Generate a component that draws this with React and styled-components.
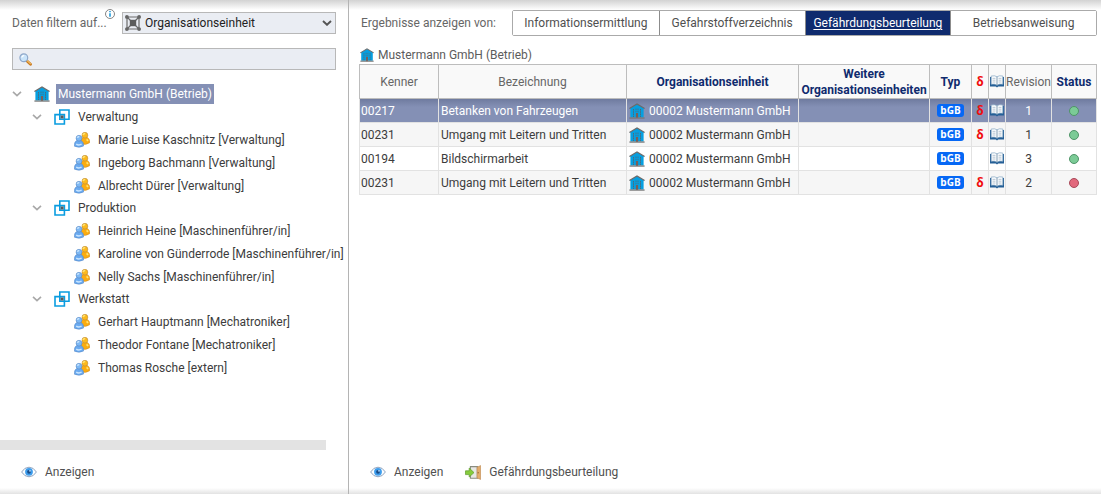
import React from "react";
import styled, { createGlobalStyle } from "styled-components";

const GlobalStyle = createGlobalStyle`
  *, *::before, *::after { box-sizing: border-box; }
  body {
    margin: 0;
    background: #fff;
    color: #3c3c3c;
    font: 12px/16px Roboto, "Open Sans", sans-serif;
  }
  button, input, select { font: inherit; color: inherit; }
  svg { flex: none; }
`;

const Page = styled.div`
  display: flex;
  min-height: 100vh;
  background:
    linear-gradient(#d2d2d2, #fff) top / 100% 10px no-repeat,
    linear-gradient(#fff, #e2e2e2) bottom / 100% 6px no-repeat,
    #fff;
`;

const Sidebar = styled.aside`
  flex: 0 0 349px;
  min-width: 0;
  display: flex;
  flex-direction: column;
  border-right: 1px solid #b4b4b4;
`;

const Main = styled.main`
  flex: 1;
  min-width: 0;
  display: flex;
  flex-direction: column;
  padding: 10px 4px 0 10px;
`;

const Filters = styled.div`
  display: flex;
  flex-direction: column;
  gap: 14px;
  padding: 12px 12px 0;
`;

const FilterRow = styled.div`
  display: flex;
  align-items: center;
  justify-content: space-between;
`;

const FilterLabel = styled.label`
  position: relative;
  color: #666;
`;

const InfoBadge = styled.span`
  position: absolute;
  left: 93px;
  top: -6px;
  display: flex;
`;

const Field = styled.div`
  position: relative;
  display: flex;
  align-items: center;
  width: ${(p) => p.$width || "100%"};
  height: 22px;
  border: 1px solid #b8b8b8;
  background: #eaedf3;
`;

const FieldIcon = styled.span`
  position: absolute;
  left: ${(p) => (p.$right ? "auto" : p.$left)};
  right: ${(p) => p.$right || "auto"};
  display: flex;
  pointer-events: none;
`;

const Select = styled.select`
  width: 100%;
  height: 100%;
  padding: 0 20px 0 22px;
  border: 0;
  background: transparent;
  color: #222;
  appearance: none;
`;

const SearchInput = styled.input`
  width: 100%;
  height: 100%;
  padding: 0 6px 0 24px;
  border: 0;
  background: transparent;
`;

const Tree = styled.ul`
  margin: 0;
  padding: ${(p) => (p.$root ? "12px 0 0" : "0")};
  list-style: none;
  white-space: nowrap;
`;

const TreeRow = styled.div`
  display: flex;
  align-items: center;
  height: ${(p) => [24, 22, 23][p.$level]}px;
  padding-left: ${(p) => [12, 32, 74][p.$level]}px;
`;

const Toggle = styled.button`
  display: flex;
  width: 22px;
  padding: 0;
  border: 0;
  background: none;
`;

const NodeLabel = styled.button`
  height: 20px;
  margin-left: 6px;
  padding: 0 2px;
  border: 0;
  background: ${(p) => (p.$selected ? "#8490b5" : "none")};
  color: ${(p) => (p.$selected ? "#fff" : "#3c3c3c")};
`;

const ScrollThumb = styled.div`
  width: 326px;
  height: 10px;
  margin-top: auto;
  background: #e3e3e3;
`;

const Footer = styled.footer`
  display: flex;
  align-items: center;
  gap: 22px;
  height: 44px;
  margin-top: ${(p) => (p.$push ? "auto" : "0")};
  padding-left: ${(p) => (p.$push ? "11px" : "21px")};
`;

const Action = styled.button`
  display: flex;
  align-items: center;
  gap: 8px;
  padding: 0;
  border: 0;
  background: none;
  color: #505050;
`;

const ResultBar = styled.div`
  display: flex;
  align-items: center;
  justify-content: space-between;
  padding-left: 2px;
  color: #666;
`;

const Tabs = styled.div`
  display: grid;
  grid-template-columns: repeat(4, 1fr);
  width: 80%;
  max-width: 585px;
  height: 26px;
  border: 1px solid #aaa;
  border-radius: 2px;
`;

const Tab = styled.button`
  padding: 0;
  border: 0;
  border-left: ${(p) => (p.$first ? "0" : "1px solid #8c8c8c")};
  background: ${(p) => (p.$active ? "#0f2b6e" : "#fff")};
  color: ${(p) => (p.$active ? "#fff" : "#505050")};
  text-decoration: ${(p) => (p.$active ? "underline" : "none")};
  text-underline-offset: 2px;
`;

const Crumb = styled.div`
  display: flex;
  align-items: center;
  gap: 4px;
  height: 18px;
  margin-top: 10px;
  padding-left: 1px;
  color: #5c5c5c;
`;

const Table = styled.table`
  width: 100%;
  table-layout: fixed;
  border-collapse: separate;
  border-spacing: 0;
`;

const Col = styled.col`
  width: ${(p) => p.$width || "auto"};
`;

const Th = styled.th`
  height: 35px;
  padding: 0;
  border: 1px solid #bdbdbd;
  border-left-width: ${(p) => (p.$first ? "1px" : "0")};
  background: #f9f9f9;
  color: ${(p) => (p.$strong ? "#0f2b6e" : "#666")};
  font-weight: ${(p) => (p.$strong ? 700 : 400)};
`;

const Tr = styled.tr`
  background: ${(p) =>
    p.$selected
      ? "linear-gradient(#6f7b9f, #8490b5 8px)"
      : p.$striped
        ? "#f6f6f6"
        : "#fff"};
  color: ${(p) => (p.$selected ? "#fff" : "#3c3c3c")};
`;

const Td = styled.td`
  height: 24px;
  padding: 0 0 0 ${(p) => (p.$center ? "0" : p.$first ? "1px" : "2px")};
  border: solid #e2e2e2;
  border-width: 0 1px 1px ${(p) => (p.$first ? "1px" : "0")};
  text-align: ${(p) => (p.$center ? "center" : "left")};
  white-space: nowrap;
`;

const CellContent = styled.span`
  display: flex;
  align-items: center;
  justify-content: ${(p) => (p.$center ? "center" : "flex-start")};
  gap: 4px;
`;

const TypeBadge = styled.span`
  width: 27px;
  height: 13px;
  border-radius: 3px;
  background: #0668f5;
  color: #fff;
  font: 700 10px/13px "Open Sans", sans-serif;
  text-align: center;
`;

const Delta = styled.span`
  color: #f00c0c;
  font-family: "Open Sans", sans-serif;
  font-weight: 700;
`;

const StatusDot = styled.span`
  width: 10px;
  height: 10px;
  border: 1px solid ${(p) => (p.$color === "red" ? "#a84a5a" : "#4f9468")};
  border-radius: 50%;
  background: ${(p) => (p.$color === "red" ? "#e2697d" : "#7bcb96")};
`;

const InfoIcon = () => (
  <svg width="10" height="10" viewBox="0 0 10 10">
    <circle cx="5" cy="5" r="4.5" fill="#fff" stroke="#777" strokeWidth=".9" />
    <path d="M5 2v1.2M5 4.2v3.6" stroke="#1495d8" strokeWidth="1.5" />
  </svg>
);

const OrgIcon = () => (
  <svg width="16" height="16" viewBox="0 0 16 16">
    <path d="M2 2H14V14H2ZM2 2L14 14M14 2L2 14" fill="none" stroke="#6a6a6a" strokeWidth="1.2" />
    <path d="M4.8 4.8h6.4v6.4H4.8z" fill="#5c5c5c" />
    <circle cx="1.9" cy="1.9" r="1.9" fill="#666" />
    <circle cx="14.1" cy="1.9" r="1.9" fill="#666" />
    <circle cx="1.9" cy="14.1" r="1.9" fill="#666" />
    <circle cx="14.1" cy="14.1" r="1.9" fill="#666" />
  </svg>
);

const SelectArrow = () => (
  <svg width="10" height="6" viewBox="0 0 10 6">
    <path d="M1 1L5 4.8L9 1" fill="none" stroke="#555" strokeWidth="1.9" />
  </svg>
);

const SearchIcon = () => (
  <svg width="13" height="13" viewBox="0 0 13 13">
    <path d="M8 8L11.5 11.3" stroke="#c97a1f" strokeWidth="2.8" strokeLinecap="round" />
    <path d="M8.2 7.6L11.4 10.6" stroke="#f3bc62" strokeWidth="1.2" strokeLinecap="round" />
    <circle cx="4.8" cy="4.8" r="3.9" fill="#c9e4fa" stroke="#8fa8ca" strokeWidth="1.2" />
    <path d="M2.8 4.5Q3.2 2.6 5.2 2.6" fill="none" stroke="#fff" strokeWidth="1.2" />
  </svg>
);

const Chevron = () => (
  <svg width="10" height="6" viewBox="0 0 10 6">
    <path d="M1 .8L5 4.6L9 .8" fill="none" stroke="#a8a8a8" strokeWidth="1.6" />
  </svg>
);

const HouseIcon = ({ size = 16 }) => (
  <svg width={size} height={size} viewBox="0 0 16 16">
    <path d="M8 1L15.4 5.4H14.6V14.6H1.4V5.4H.6Z" fill="#069fe0" />
    <path d="M.4 5.6L8 1L15.6 5.6" fill="none" stroke="#6b6b6b" strokeWidth="1.2" />
    <path d="M4.5 6v8M11.5 6v8" stroke="#4c6a7c" strokeWidth="1" strokeDasharray="1.6 .6" />
    <path d="M7 5.5v4M9 5.5v4" stroke="#4c6a7c" strokeWidth=".8" strokeDasharray="1.5 .7" />
    <path d="M6.9 10h2.2v5H6.9z" fill="#7a5f58" />
    <path d="M.4 14.4h15.2v1.3H.4z" fill="#777" />
  </svg>
);

const GroupIcon = () => (
  <svg width="16" height="16" viewBox="0 0 16 16">
    <path d="M5.8 1h9.2v9.2H5.8z" fill="none" stroke="#0a9de0" strokeWidth="1.6" />
    <path d="M1 5.6h9.4V15H1z" fill="none" stroke="#0a9de0" strokeWidth="1.6" />
    <path d="M6.6 6.5h3v3h-3z" fill="#5a5a5a" />
  </svg>
);

const PeopleIcon = () => (
  <svg width="16" height="16" viewBox="0 0 16 16">
    <path d="M7 11.8Q6.2 6 9 5.4L13.5 5.4Q16.2 7.2 15.6 10.8Q12 13.4 7 11.8Z" fill="#fbac10" stroke="#c98522" strokeWidth=".5" />
    <circle cx="10.9" cy="3.2" r="2.9" fill="#fcb91c" stroke="#b98a40" strokeWidth=".6" />
    <path d="M9 3Q9.6 1.5 11.2 1.5M12.6 7.4l1.5 1.6" fill="none" stroke="#ffe372" strokeWidth="1.6" />
    <path d="M.4 14.2Q0 9.6 2.8 8.6L7 8.6Q10 9.8 9.6 14Q5 16.4 .4 14.2Z" fill="#6aaaf0" stroke="#5584c0" strokeWidth=".5" />
    <circle cx="5" cy="6.2" r="2.9" fill="#7db8f4" stroke="#5a88c2" strokeWidth=".6" />
    <path d="M3.3 5.8Q3.9 4.4 5.3 4.4M2.2 12.1Q5 13.8 7.6 12" fill="none" stroke="#c8e5ff" strokeWidth="1.5" />
  </svg>
);

const BookIcon = () => (
  <svg width="14" height="13" viewBox="0 0 14 13">
    <path d="M0 2H14V11.6H8.2L7 12.4L5.8 11.6H0Z" fill="#245f96" />
    <path d="M1.2 1Q5 .2 7 1.8Q9 .2 12.8 1V9.2Q9 8.6 7 10.2Q5 8.6 1.2 9.2Z" fill="#f8fbfd" stroke="#86a8c4" strokeWidth=".7" />
    <path d="M7 1.8V10" stroke="#7894ac" strokeWidth=".9" />
    <path d="M2.6 3.4h2.8M2.6 5.2h2.8M2.6 7h2.8M8.6 3.4h2.8M8.6 5.2h2.8M8.6 7h2.8" stroke="#b5c3d0" strokeWidth=".9" />
  </svg>
);

const EyeIcon = () => (
  <svg width="16" height="12" viewBox="0 0 16 12">
    <path d="M.6 6Q3.5 1.2 8 1.2T15.4 6Q12.5 10.8 8 10.8T.6 6Z" fill="#fafdff" stroke="#8299b8" strokeWidth=".9" />
    <circle cx="8" cy="5.8" r="3.9" fill="#3c9cec" />
    <circle cx="8" cy="5.8" r="1.9" fill="#174a86" />
    <circle cx="9" cy="4.8" r=".9" fill="#b8dcfa" />
  </svg>
);

const DoorIcon = () => (
  <svg width="16" height="15" viewBox="0 0 16 15">
    <path d="M5.4 1.6h7v11.6h-7z" fill="#e8e8e4" stroke="#8a8c80" strokeWidth="1.1" />
    <path d="M12 2.2L15.7 .6V14.4L12 13Z" fill="#e3ad6c" stroke="#b98450" strokeWidth=".6" />
    <path d="M13.2 7v1.4" stroke="#805020" strokeWidth=".8" />
    <path d="M.5 5.8H4.2V3L9 7.6L4.2 12V9.6H.5Z" fill="#86cc3c" stroke="#5e9c2c" strokeWidth=".7" />
  </svg>
);

const groups = [
  {
    name: "Verwaltung",
    people: [
      "Marie Luise Kaschnitz [Verwaltung]",
      "Ingeborg Bachmann [Verwaltung]",
      "Albrecht Dürer [Verwaltung]",
    ],
  },
  {
    name: "Produktion",
    people: [
      "Heinrich Heine [Maschinenführer/in]",
      "Karoline von Günderrode [Maschinenführer/in]",
      "Nelly Sachs [Maschinenführer/in]",
    ],
  },
  {
    name: "Werkstatt",
    people: [
      "Gerhart Hauptmann [Mechatroniker]",
      "Theodor Fontane [Mechatroniker]",
      "Thomas Rosche [extern]",
    ],
  },
];

const tabs = [
  "Informationsermittlung",
  "Gefahrstoffverzeichnis",
  "Gefährdungsbeurteilung",
  "Betriebsanweisung",
];

const rows = [
  { id: "00217", name: "Betanken von Fahrzeugen", delta: true, rev: 1, status: "green" },
  { id: "00231", name: "Umgang mit Leitern und Tritten", delta: true, rev: 1, status: "green" },
  { id: "00194", name: "Bildschirmarbeit", delta: false, rev: 3, status: "green" },
  { id: "00231", name: "Umgang mit Leitern und Tritten", delta: true, rev: 2, status: "red" },
];

function Group({ group }) {
  return (
    <li>
      <TreeRow $level={1}>
        <Toggle aria-label={group.name}><Chevron /></Toggle>
        <GroupIcon />
        <NodeLabel>{group.name}</NodeLabel>
      </TreeRow>
      <Tree>
        {group.people.map((person) => (
          <li key={person}>
            <TreeRow $level={2}>
              <PeopleIcon />
              <NodeLabel>{person}</NodeLabel>
            </TreeRow>
          </li>
        ))}
      </Tree>
    </li>
  );
}

function ResultTable() {
  return (
    <Table>
      <colgroup>
        <Col $width="80px" />
        <Col />
        <Col $width="172px" />
        <Col $width="131px" />
        <Col $width="42px" />
        <Col $width="17px" />
        <Col $width="17px" />
        <Col $width="46px" />
        <Col $width="45px" />
      </colgroup>
      <thead>
        <tr>
          <Th $first>Kenner</Th>
          <Th>Bezeichnung</Th>
          <Th $strong>Organisationseinheit</Th>
          <Th $strong>Weitere Organisationseinheiten</Th>
          <Th $strong>Typ</Th>
          <Th><Delta>δ</Delta></Th>
          <Th><CellContent $center><BookIcon /></CellContent></Th>
          <Th>Revision</Th>
          <Th $strong>Status</Th>
        </tr>
      </thead>
      <tbody>
        {rows.map((row, i) => (
          <Tr key={i} $selected={i === 0} $striped={i % 2 === 1}>
            <Td $first>{row.id}</Td>
            <Td>{row.name}</Td>
            <Td><CellContent><HouseIcon />00002 Mustermann GmbH</CellContent></Td>
            <Td />
            <Td $center><CellContent $center><TypeBadge>bGB</TypeBadge></CellContent></Td>
            <Td $center>{row.delta && <Delta>δ</Delta>}</Td>
            <Td $center><CellContent $center><BookIcon /></CellContent></Td>
            <Td $center>{row.rev}</Td>
            <Td $center><CellContent $center><StatusDot $color={row.status} /></CellContent></Td>
          </Tr>
        ))}
      </tbody>
    </Table>
  );
}

export default function App() {
  return (
    <>
      <GlobalStyle />
      <Page>
        <Sidebar>
          <Filters>
            <FilterRow>
              <FilterLabel htmlFor="filter">
                Daten filtern auf...
                <InfoBadge><InfoIcon /></InfoBadge>
              </FilterLabel>
              <Field $width="214px">
                <FieldIcon $left="2px"><OrgIcon /></FieldIcon>
                <Select id="filter" defaultValue="org">
                  <option value="org">Organisationseinheit</option>
                </Select>
                <FieldIcon $right="3px"><SelectArrow /></FieldIcon>
              </Field>
            </FilterRow>
            <Field>
              <FieldIcon $left="6px"><SearchIcon /></FieldIcon>
              <SearchInput type="search" aria-label="Suche" />
            </Field>
          </Filters>
          <Tree $root>
            <li>
              <TreeRow $level={0}>
                <Toggle aria-label="Mustermann GmbH"><Chevron /></Toggle>
                <HouseIcon />
                <NodeLabel $selected>Mustermann GmbH (Betrieb)</NodeLabel>
              </TreeRow>
              <Tree>
                {groups.map((group) => (
                  <Group key={group.name} group={group} />
                ))}
              </Tree>
            </li>
          </Tree>
          <ScrollThumb />
          <Footer>
            <Action><EyeIcon />Anzeigen</Action>
          </Footer>
        </Sidebar>
        <Main>
          <ResultBar>
            <span>Ergebnisse anzeigen von:</span>
            <Tabs role="tablist">
              {tabs.map((tab, i) => (
                <Tab key={tab} role="tab" aria-selected={i === 2} $first={i === 0} $active={i === 2}>
                  {tab}
                </Tab>
              ))}
            </Tabs>
          </ResultBar>
          <Crumb><HouseIcon size={14} />Mustermann GmbH (Betrieb)</Crumb>
          <ResultTable />
          <Footer $push>
            <Action><EyeIcon />Anzeigen</Action>
            <Action><DoorIcon />Gefährdungsbeurteilung</Action>
          </Footer>
        </Main>
      </Page>
    </>
  );
}
